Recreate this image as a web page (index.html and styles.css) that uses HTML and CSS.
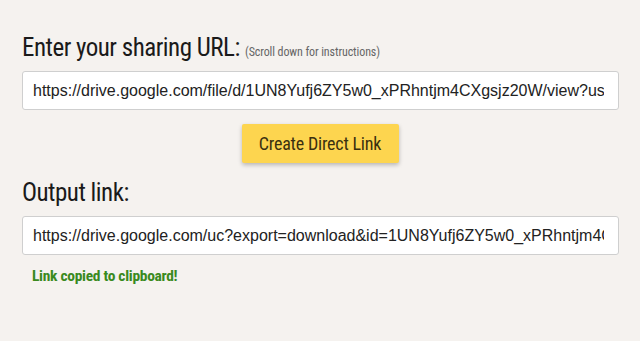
FILE: index.html
```html
<!DOCTYPE html>
<html>

<head>
    <title>Direct Link Generator</title>
    <link rel="stylesheet" href="styles.css">
</head>

<body>
    <div class="wrap">
        <h2 class="label">Enter your sharing URL: <small>(Scroll down for instructions)</small></h2>
        <input class="url-box" type="text" id="shareUrl"
            value="https://drive.google.com/file/d/1UN8Yufj6ZY5w0_xPRhntjm4CXgsjz20W/view?usp=sharing">

        <div class="actions">
            <button id="createBtn">Create Direct Link</button>
        </div>

        <h2 class="label">Output link:</h2>
        <input class="url-box" type="text" id="outputUrl"
            value="https://drive.google.com/uc?export=download&amp;id=1UN8Yufj6ZY5w0_xPRhntjm4CXgsjz20W">

        <div class="copied" id="copied">Link copied to clipboard!</div>
    </div>
</body>

</html>
```

FILE: styles.css
```css
html,
body {
    margin: 0;
    background-color: #f5f2ef;
}

body {
    font-family: "Roboto Condensed", Roboto, "Liberation Sans", sans-serif;
    font-stretch: condensed;
    color: #1a1a1a;
}

.wrap {
    padding: 33px 21px 0 22px;
}

.label {
    margin: 0;
    font-size: 25px;
    font-weight: 400;
    line-height: 30px;
    letter-spacing: -0.5px;
}

.label small {
    font-size: 12px;
    line-height: 0;
    color: #666;
    letter-spacing: -0.1px;
}

.url-box {
    display: block;
    box-sizing: border-box;
    width: 597px;
    height: 39px;
    margin-top: 8px;
    padding: 0 14px 0 10px;
    border: 1px solid #cfcfcf;
    border-radius: 3px;
    background-color: #fff;
    font-family: "Liberation Sans", Arial, sans-serif;
    font-size: 16px;
    color: #222;
}

.actions {
    display: flex;
    justify-content: center;
    margin: 14px 0 15px;
}

#createBtn {
    width: 157px;
    height: 39px;
    margin-left: -1px;
    border: none;
    border-radius: 2px;
    background-color: #fdd54f;
    box-shadow: 0 2px 4px rgba(0, 0, 0, 0.25);
    font-family: inherit;
    font-size: 18px;
    color: #3a3010;
    letter-spacing: -0.2px;
}

.copied {
    margin: 12px 0 0 10px;
    font-size: 15.5px;
    font-weight: 700;
    color: #3a8a1e;
    letter-spacing: -0.3px;
}
```
